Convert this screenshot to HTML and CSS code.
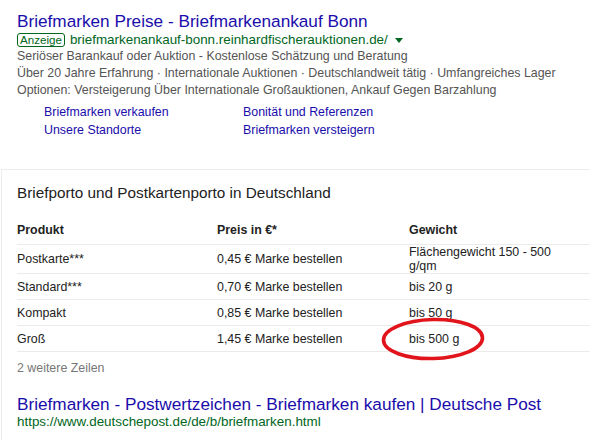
FILE: index.html
```html
<!DOCTYPE html>
<html lang="de">
<head>
<meta charset="utf-8">
<title>Briefmarken</title>
<link rel="stylesheet" href="styles.css">
</head>
<body>
<div class="ad">
  <a class="title" href="#">Briefmarken Preise - Briefmarkenankauf Bonn</a>
  <div class="urlline"><span class="badge">Anzeige</span><span class="url">briefmarkenankauf-bonn.reinhardfischerauktionen.de/</span><span class="caret"></span></div>
  <div class="snippet">Seriöser Barankauf oder Auktion - Kostenlose Schätzung und Beratung</div>
  <div class="snippet">Über 20 Jahre Erfahrung · Internationale Auktionen · Deutschlandweit tätig · Umfangreiches Lager</div>
  <div class="snippet">Optionen: Versteigerung Über Internationale Großauktionen, Ankauf Gegen Barzahlung</div>
  <div class="sitelinks">
    <a href="#">Briefmarken verkaufen</a>
    <a href="#">Bonität und Referenzen</a>
    <a href="#">Unsere Standorte</a>
    <a href="#">Briefmarken versteigern</a>
  </div>
</div>
<div class="card">
  <div class="card-title">Briefporto und Postkartenporto in Deutschland</div>
  <div class="table">
    <div class="row head"><div>Produkt</div><div>Preis in €*</div><div>Gewicht</div></div>
    <div class="row"><div>Postkarte***</div><div>0,45 € Marke bestellen</div><div class="wrap">Flächengewicht 150 - 500 g/qm</div></div>
    <div class="row"><div>Standard***</div><div>0,70 € Marke bestellen</div><div>bis 20 g</div></div>
    <div class="row"><div>Kompakt</div><div>0,85 € Marke bestellen</div><div>bis 50 g</div></div>
    <div class="row last"><div>Groß</div><div>1,45 € Marke bestellen</div><div class="marked">bis 500 g<svg class="circle" width="106" height="46" viewBox="0 0 106 46"><ellipse cx="53" cy="23" rx="49.5" ry="19.5" fill="none" stroke="#e1141c" stroke-width="3.6" transform="rotate(-1.5 53 23)"/></svg></div></div>
  </div>
  <div class="more">2 weitere Zeilen</div>
  <a class="title res" href="#">Briefmarken - Postwertzeichen - Briefmarken kaufen | Deutsche Post</a>
  <div class="url plain">https://www.deutschepost.de/de/b/briefmarken.html</div>
</div>
</body>
</html>
```
FILE: styles.css
```css
html, body {
  margin: 0;
  padding: 0;
  background: #fff;
  overflow: hidden;
  width: 590px;
  height: 440px;
}
body {
  font-family: "Liberation Sans", Arial, sans-serif;
  color: #222;
}
a { text-decoration: none; }

.ad {
  padding: 11px 0 0 17px;
}
.title {
  display: block;
  font-size: 17.2px;
  line-height: 21px;
  color: #1a0dab;
  white-space: nowrap;
}
.urlline {
  display: flex;
  align-items: center;
  height: 16px;
}
.badge {
  font-size: 11.6px;
  line-height: 12px;
  color: #006621;
  border: 1px solid #006621;
  border-radius: 3px;
  padding: 0 2px;
  margin-right: 5px;
}
.url {
  font-size: 13.4px;
  line-height: 16px;
  color: #006621;
  white-space: nowrap;
}
.caret {
  width: 0;
  height: 0;
  border-left: 4px solid transparent;
  border-right: 4px solid transparent;
  border-top: 5px solid #006621;
  margin-left: 7px;
  margin-top: 1px;
}
.snippet {
  font-size: 12.4px;
  line-height: 17px;
  color: #545454;
  white-space: nowrap;
}
.sitelinks {
  display: grid;
  grid-template-columns: 199px auto;
  padding-left: 27px;
  margin-top: 4px;
}
.sitelinks a {
  font-size: 12.4px;
  line-height: 18px;
  color: #1a0dab;
}

.card {
  margin: 30px 0 0 1px;
  border-top: 1px solid #ececec;
  border-left: 1px solid #ececec;
  padding: 13px 0 12px 15px;
}
.card-title {
  font-size: 15.3px;
  line-height: 20px;
  color: #222;
}
.table {
  margin-top: 13px;
  font-size: 12.4px;
  line-height: 14px;
  color: #222;
}
.row {
  display: grid;
  grid-template-columns: 200px 192px 1fr;
  align-items: center;
  min-height: 25px;
  border-top: 1px solid #ebebeb;
}
.row.head {
  border-top: 0;
  min-height: 28px;
  font-weight: bold;
}
.row.last {
  border-bottom: 1px solid #ebebeb;
}
.wrap { max-width: 150px; }
.marked { position: relative; }
.circle {
  position: absolute;
  left: -29px;
  top: -16px;
}
.more {
  margin-top: 8px;
  font-size: 12.4px;
  line-height: 17px;
  color: #777;
}
.title.res {
  margin-top: 17px;
  line-height: 20px;
}
.url.plain {
  display: block;
}
```
